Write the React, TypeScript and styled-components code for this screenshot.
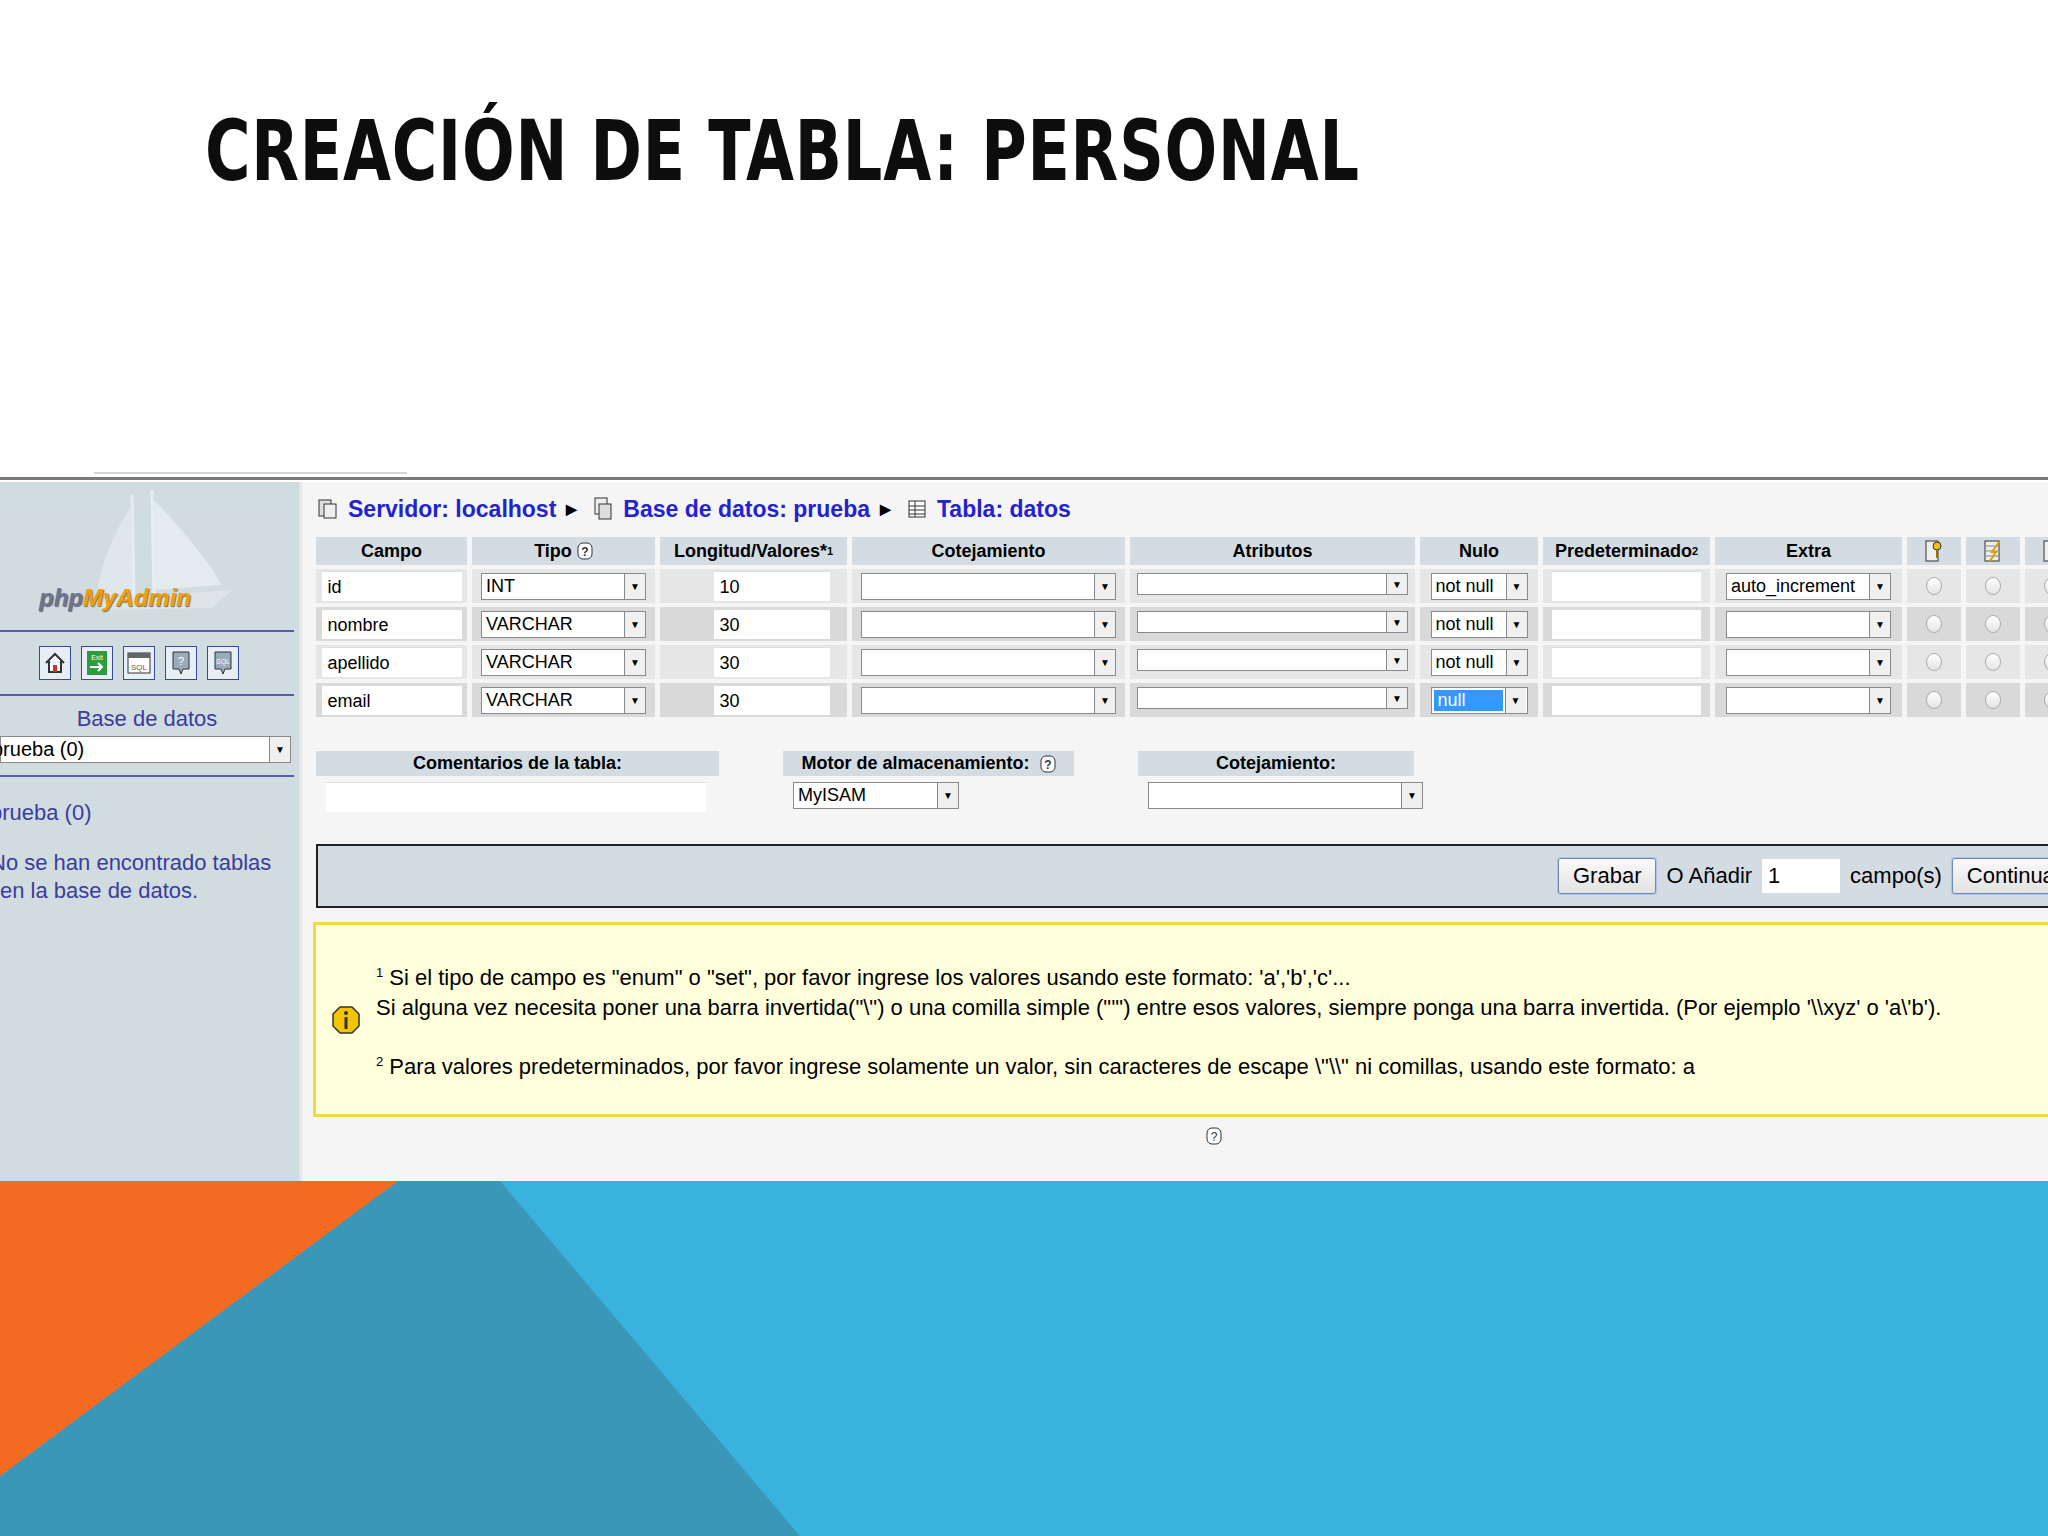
import styled, { createGlobalStyle } from "styled-components";

const Global = createGlobalStyle`
  html, body { margin: 0; padding: 0; }
  body { width: 2048px; height: 1536px; overflow: hidden; background: #fff; font-family: "Liberation Sans", Arial, sans-serif; }
`;

const Page = styled.div`
  width: 2048px;
  height: 1536px;
  display: flex;
  flex-direction: column;
  overflow: hidden;
`;

const TitleArea = styled.div`
  height: 472px;
  padding: 102px 0 0 205px;
  box-sizing: border-box;
`;

const Title = styled.h1`
  margin: 0;
  font-family: "Liberation Sans Narrow", "DejaVu Sans Condensed", "Liberation Sans", sans-serif;
  font-weight: bold;
  font-size: 84px;
  letter-spacing: 1px;
  color: #0d0d0d;
  white-space: nowrap;
  transform: scaleX(0.82);
  transform-origin: left;
`;

const TopLines = styled.div`
  height: 10px;
  display: flex;
  flex-direction: column;
  gap: 3px;
`;

const ShortLine = styled.div`
  margin-left: 94px;
  width: 313px;
  height: 2px;
  background: #d4d4d4;
`;

const LongLine = styled.div`
  height: 3px;
  background: #7a7a7a;
`;

const Shot = styled.div`
  height: 699px;
  display: flex;
`;

const Sidebar = styled.div`
  width: 299px;
  flex: none;
  background: #d0dce0;
  display: flex;
  flex-direction: column;
  overflow: hidden;
  color: #3c3c9c;
  font-size: 22px;
`;

const LogoBox = styled.div`
  position: relative;
  height: 136px;
  padding: 0 0 0 39px;
  display: flex;
  align-items: flex-end;
`;

const Ship = styled.svg`
  position: absolute;
  left: 92px;
  top: 8px;
`;

const LogoText = styled.div`
  position: relative;
  font-family: "Liberation Sans", sans-serif;
  font-weight: bold;
  font-style: italic;
  font-size: 24px;
  color: #6c7596;
  text-shadow: 1px 1px 1px #666;
  padding-bottom: 6px;
  span { color: #f0a000; }
`;

const Rule = styled.div`
  width: 294px;
  height: 2px;
  background: #5a5ab0;
  margin: ${(p: { $m: string }) => p.$m};
`;

const IconRow = styled.div`
  display: flex;
  gap: 10px;
  padding-left: 39px;
`;

const NavIcon = styled.div`
  width: 30px;
  height: 32px;
  border: 1px solid #3a4a9a;
  background: #e8eef6;
  display: flex;
  align-items: center;
  justify-content: center;
`;

const SideLabel = styled.div`
  width: 294px;
  text-align: center;
  margin-top: 10px;
`;

const SideSelect = styled.div`
  width: 291px;
  height: 27px;
  margin-top: 4px;
  background: #fff;
  border: 1px solid #888;
  box-sizing: border-box;
  display: flex;
  color: #000;
  font-size: 20px;
  div:first-child { flex: 1; text-indent: -9px; line-height: 25px; }
`;

const SideText = styled.div`
  margin: ${(p: { $m: string }) => p.$m};
  text-indent: -10px;
  line-height: 28px;
  white-space: nowrap;
`;

const Main = styled.div`
  flex: 1;
  background: #f5f5f6;
  border-left: 3px solid #e4e8ea;
  padding: 9px 0 0 14px;
  overflow: hidden;
  font-size: 18px;
  color: #000;
`;

const Crumbs = styled.div`
  display: flex;
  align-items: center;
  gap: 10px;
  font-size: 23px;
  font-weight: bold;
  color: #2222d0;
  height: 36px;
  white-space: nowrap;
`;

const Arrow = styled.span`
  color: #000;
  font-size: 14px;
  margin-right: 6px;
`;

const Grid = styled.div`
  margin-top: 10px;
  display: grid;
  grid-template-columns: 151px 183px 187px 273px 285px 118px 167px 187px 54px 54px 54px;
  column-gap: 5px;
  row-gap: 4px;
  width: max-content;
`;

const Head = styled.div`
  background: #d3dce3;
  height: 28px;
  font-weight: bold;
  display: flex;
  align-items: center;
  justify-content: center;
  white-space: nowrap;
  sup { font-size: 11px; }
`;

const Cell = styled.div<{ $even?: boolean; $align?: string }>`
  background: ${(p) => (p.$even ? "#d9d9d9" : "#e6e6e6")};
  height: 34px;
  display: flex;
  align-items: ${(p) => p.$align || "center"};
  justify-content: center;
  box-sizing: border-box;
  padding-top: ${(p) => (p.$align ? "4px" : "0")};
`;

const TextBox = styled.div<{ $w: number }>`
  width: ${(p) => p.$w}px;
  height: 30px;
  background: #fff;
  border-top: 1px solid #ddd;
  box-sizing: border-box;
  padding-left: 6px;
  line-height: 30px;
  font-size: 18px;
  text-align: left;
`;

const SelectBox = styled.div<{ $w: number; $h?: number }>`
  width: ${(p) => p.$w}px;
  height: ${(p) => p.$h || 27}px;
  background: #fff;
  border: 1px solid #8a8a8a;
  box-sizing: border-box;
  display: flex;
  font-size: 18px;
`;

const SelectValue = styled.div<{ $hl?: boolean }>`
  flex: 1;
  padding-left: 4px;
  line-height: 24px;
  white-space: nowrap;
  overflow: hidden;
  ${(p) => p.$hl && "background: #3399ff; color: #fff; margin: 2px; flex: none; width: 65px; line-height: 20px;"}
`;

const DropBtn = styled.div`
  width: 20px;
  border-left: 1px solid #888;
  background: #f0f0f0;
  display: flex;
  align-items: center;
  justify-content: center;
  font-size: 10px;
`;

const Radio = styled.div`
  width: 14px;
  height: 16px;
  border-radius: 50%;
  border: 1px solid #aaa;
  background: linear-gradient(#fff, #e4e4e4);
`;

const Options = styled.div`
  margin-top: 34px;
  display: flex;
  gap: 64px;
`;

const OptGroup = styled.div<{ $w: number }>`
  width: ${(p) => p.$w}px;
  display: flex;
  flex-direction: column;
  gap: 6px;
`;

const OptHead = styled.div`
  background: #d3dce3;
  height: 25px;
  font-weight: bold;
  display: flex;
  align-items: center;
  justify-content: center;
  gap: 10px;
`;

const OptBody = styled.div`
  padding-left: 10px;
`;

const ButtonBar = styled.div`
  margin-top: 32px;
  width: 1900px;
  height: 64px;
  border: 2px solid #222;
  background: #d3dce3;
  box-sizing: border-box;
  display: flex;
  align-items: center;
  gap: 10px;
  padding-left: 1240px;
  font-size: 22px;
  white-space: nowrap;
`;

const Button = styled.div`
  height: 34px;
  padding: 0 14px;
  border: 1px solid #6f8ab0;
  background: linear-gradient(#fafafa, #e2e2e2);
  border-radius: 3px;
  line-height: 34px;
  font-size: 22px;
  box-shadow: 0 0 0 1px #a9c4e8;
`;

const AddInput = styled.div`
  width: 78px;
  height: 34px;
  background: #fff;
  line-height: 34px;
  padding-left: 6px;
  box-sizing: border-box;
`;

const Notice = styled.div`
  margin-top: 14px;
  margin-left: -3px;
  width: 1900px;
  height: 195px;
  border: 3px solid #f4d83c;
  background: #ffffdc;
  box-sizing: border-box;
  display: flex;
  align-items: center;
  gap: 16px;
  padding-left: 16px;
  font-size: 22px;
  white-space: nowrap;
`;

const NoticeText = styled.div`
  line-height: 29px;
  sup { font-size: 13px; margin-right: 6px; }
  p { margin: 0; }
  p + p + p { margin-top: 25px; }
`;

const HelpLine = styled.div`
  width: 1900px;
  padding-left: 890px;
  margin-top: 10px;
`;

const Bottom = styled.svg`
  display: block;
  flex: 1;
`;

const Help = () => (
  <svg width="16" height="18" viewBox="0 0 16 18">
    <rect x="1" y="1" width="14" height="16" rx="5" fill="#fff" stroke="#333" />
    <text x="8" y="14" fontSize="12" textAnchor="middle" fontFamily="Liberation Sans" fill="#333">?</text>
  </svg>
);

const Select = ({ w, v, h, hl }: { w: number; v?: string; h?: number; hl?: boolean }) => (
  <SelectBox $w={w} $h={h}>
    <SelectValue $hl={hl}>{v}</SelectValue>
    <DropBtn>▼</DropBtn>
  </SelectBox>
);

const rows = [
  { name: "id", type: "INT", len: "10", nulo: "not null", extra: "auto_increment" },
  { name: "nombre", type: "VARCHAR", len: "30", nulo: "not null", extra: "" },
  { name: "apellido", type: "VARCHAR", len: "30", nulo: "not null", extra: "" },
  { name: "email", type: "VARCHAR", len: "30", nulo: "null", extra: "" },
];

export default function App() {
  return (
    <Page>
      <Global />
      <TitleArea>
        <Title>CREACIÓN DE TABLA: PERSONAL</Title>
      </TitleArea>
      <TopLines>
        <ShortLine />
        <LongLine />
      </TopLines>
      <Shot>
        <Sidebar>
          <LogoBox>
            <Ship width="150" height="120" viewBox="0 0 150 120">
              <path d="M40 5 L42 110 M60 0 L62 110" stroke="#e8eef0" strokeWidth="3" />
              <path d="M40 15 Q10 60 5 105 L40 105 Z" fill="#dfe7ea" />
              <path d="M62 10 Q110 60 130 95 L62 100 Z" fill="#e4ebee" />
              <path d="M0 110 L140 100 L120 118 L10 120 Z" fill="#dde5e8" />
            </Ship>
            <LogoText>php<span>MyAdmin</span></LogoText>
          </LogoBox>
          <Rule $m="12px 0 14px" />
          <IconRow>
            <NavIcon><svg width="22" height="24" viewBox="0 0 22 24"><path d="M2 12 L11 3 L20 12 M5 10 V21 H17 V10" fill="#fff" stroke="#333" strokeWidth="2" /><rect x="9" y="14" width="4" height="7" fill="#c33" /></svg></NavIcon>
            <NavIcon><svg width="22" height="26" viewBox="0 0 22 26"><rect x="1" y="1" width="20" height="24" fill="#2c9c3c" /><text x="11" y="10" fontSize="7" fill="#fff" textAnchor="middle" fontFamily="Liberation Sans">Exit</text><path d="M4 17 H16 M12 13 L16 17 L12 21" stroke="#fff" strokeWidth="2" fill="none" /></svg></NavIcon>
            <NavIcon><svg width="24" height="24" viewBox="0 0 24 24"><rect x="1" y="2" width="22" height="20" fill="#fff" stroke="#333" /><rect x="1" y="2" width="22" height="5" fill="#666" /><text x="12" y="19" fontSize="8" fill="#c33" textAnchor="middle" fontFamily="Liberation Sans">SQL</text></svg></NavIcon>
            <NavIcon><svg width="20" height="26" viewBox="0 0 20 26"><path d="M2 2 H18 V19 H12 L10 24 L8 19 H2 Z" fill="#9ab" stroke="#333" /><text x="10" y="15" fontSize="11" fill="#fff" textAnchor="middle" fontFamily="Liberation Sans">?</text></svg></NavIcon>
            <NavIcon><svg width="20" height="26" viewBox="0 0 20 26"><path d="M2 2 H18 V19 H12 L10 24 L8 19 H2 Z" fill="#9ab" stroke="#333" /><text x="10" y="14" fontSize="7" fill="#fff" textAnchor="middle" fontFamily="Liberation Sans">SQL</text></svg></NavIcon>
          </IconRow>
          <Rule $m="14px 0 0" />
          <SideLabel>Base de datos</SideLabel>
          <SideSelect><div>prueba (0)</div><DropBtn>▼</DropBtn></SideSelect>
          <Rule $m="12px 0 0" />
          <SideText $m="22px 0 0">prueba (0)</SideText>
          <SideText $m="22px 0 0">No se han encontrado tablas<br />en la base de datos.</SideText>
        </Sidebar>
        <Main>
          <Crumbs>
            <svg width="22" height="22" viewBox="0 0 22 22"><rect x="3" y="2" width="12" height="16" fill="#ddd" stroke="#333" /><rect x="8" y="6" width="12" height="14" fill="#eee" stroke="#333" /></svg>
            <span>Servidor: localhost</span><Arrow>▶</Arrow>
            <svg width="20" height="24" viewBox="0 0 20 24"><rect x="2" y="1" width="12" height="16" fill="#eee" stroke="#333" /><rect x="6" y="7" width="12" height="15" fill="#ddd" stroke="#333" /></svg>
            <span>Base de datos: prueba</span><Arrow>▶</Arrow>
            <svg width="20" height="20" viewBox="0 0 20 20"><rect x="2" y="2" width="16" height="16" fill="#fff" stroke="#333" /><path d="M2 7 H18 M2 11 H18 M2 15 H18 M8 2 V18" stroke="#333" /></svg>
            <span>Tabla: datos</span>
          </Crumbs>
          <Grid>
            <Head>Campo</Head>
            <Head>Tipo&nbsp;<Help /></Head>
            <Head>Longitud/Valores*<sup>1</sup></Head>
            <Head>Cotejamiento</Head>
            <Head>Atributos</Head>
            <Head>Nulo</Head>
            <Head>Predeterminado<sup>2</sup></Head>
            <Head>Extra</Head>
            <Head><svg width="18" height="22" viewBox="0 0 18 22"><rect x="1" y="1" width="12" height="20" fill="#eee" stroke="#333" /><circle cx="12" cy="6" r="4" fill="#f0c020" stroke="#333" /><path d="M12 10 V18" stroke="#a07000" strokeWidth="2" /></svg></Head>
            <Head><svg width="18" height="22" viewBox="0 0 18 22"><rect x="1" y="1" width="14" height="20" fill="#eee" stroke="#333" /><path d="M2 6 H14 M2 11 H14 M2 16 H14" stroke="#888" /><path d="M15 2 L8 12 L12 12 L6 21" stroke="#e0a000" strokeWidth="2" fill="none" /></svg></Head>
            <Head><svg width="18" height="22" viewBox="0 0 18 22"><rect x="1" y="1" width="14" height="20" fill="#eee" stroke="#333" /></svg></Head>
            {rows.map((r, i) => {
              const even = i % 2 === 1;
              return [
                <Cell key={`a${i}`} $even={even}><TextBox $w={140}>{r.name}</TextBox></Cell>,
                <Cell key={`b${i}`} $even={even}><Select w={165} v={r.type} /></Cell>,
                <Cell key={`c${i}`} $even={even}><TextBox $w={116} style={{ marginLeft: 36 }}>{r.len}</TextBox></Cell>,
                <Cell key={`d${i}`} $even={even}><Select w={255} /></Cell>,
                <Cell key={`e${i}`} $even={even} $align="flex-start"><Select w={271} h={22} /></Cell>,
                <Cell key={`f${i}`} $even={even}><Select w={97} v={r.nulo} hl={r.nulo === "null"} /></Cell>,
                <Cell key={`g${i}`} $even={even}><TextBox $w={149} /></Cell>,
                <Cell key={`h${i}`} $even={even}><Select w={165} v={r.extra} /></Cell>,
                <Cell key={`i${i}`} $even={even}><Radio /></Cell>,
                <Cell key={`j${i}`} $even={even}><Radio /></Cell>,
                <Cell key={`k${i}`} $even={even}><Radio /></Cell>,
              ];
            })}
          </Grid>
          <Options>
            <OptGroup $w={403}>
              <OptHead>Comentarios de la tabla:</OptHead>
              <OptBody><TextBox $w={380} /></OptBody>
            </OptGroup>
            <OptGroup $w={291}>
              <OptHead>Motor de almacenamiento: <Help /></OptHead>
              <OptBody><Select w={166} v="MyISAM" /></OptBody>
            </OptGroup>
            <OptGroup $w={276}>
              <OptHead>Cotejamiento:</OptHead>
              <OptBody><Select w={275} /></OptBody>
            </OptGroup>
          </Options>
          <ButtonBar>
            <Button>Grabar</Button>
            <span>O Añadir</span>
            <AddInput>1</AddInput>
            <span>campo(s)</span>
            <Button>Continuar</Button>
          </ButtonBar>
          <Notice>
            <svg width="28" height="28" viewBox="0 0 28 28"><path d="M8 1 H20 L27 8 V20 L20 27 H8 L1 20 V8 Z" fill="#f5c400" stroke="#333" strokeWidth="1.5" /><circle cx="14" cy="7" r="2" fill="#333" /><rect x="12.5" y="11" width="3" height="12" fill="#333" /></svg>
            <NoticeText>
              <p><sup>1</sup>Si el tipo de campo es "enum" o "set", por favor ingrese los valores usando este formato: 'a','b','c'...</p>
              <p>Si alguna vez necesita poner una barra invertida("\") o una comilla simple ("'") entre esos valores, siempre ponga una barra invertida. (Por ejemplo '\\xyz' o 'a\'b').</p>
              <p><sup>2</sup>Para valores predeterminados, por favor ingrese solamente un valor, sin caracteres de escape \"\\" ni comillas, usando este formato: a</p>
            </NoticeText>
          </Notice>
          <HelpLine><Help /></HelpLine>
        </Main>
      </Shot>
      <Bottom viewBox="0 0 2048 355" preserveAspectRatio="none">
        <rect width="2048" height="355" fill="#3ab2de" />
        <polygon points="398,0 500,0 800,355 0,355 0,295" fill="#3a97b8" />
        <polygon points="0,0 398,0 0,295" fill="#f46a20" />
      </Bottom>
    </Page>
  );
}
